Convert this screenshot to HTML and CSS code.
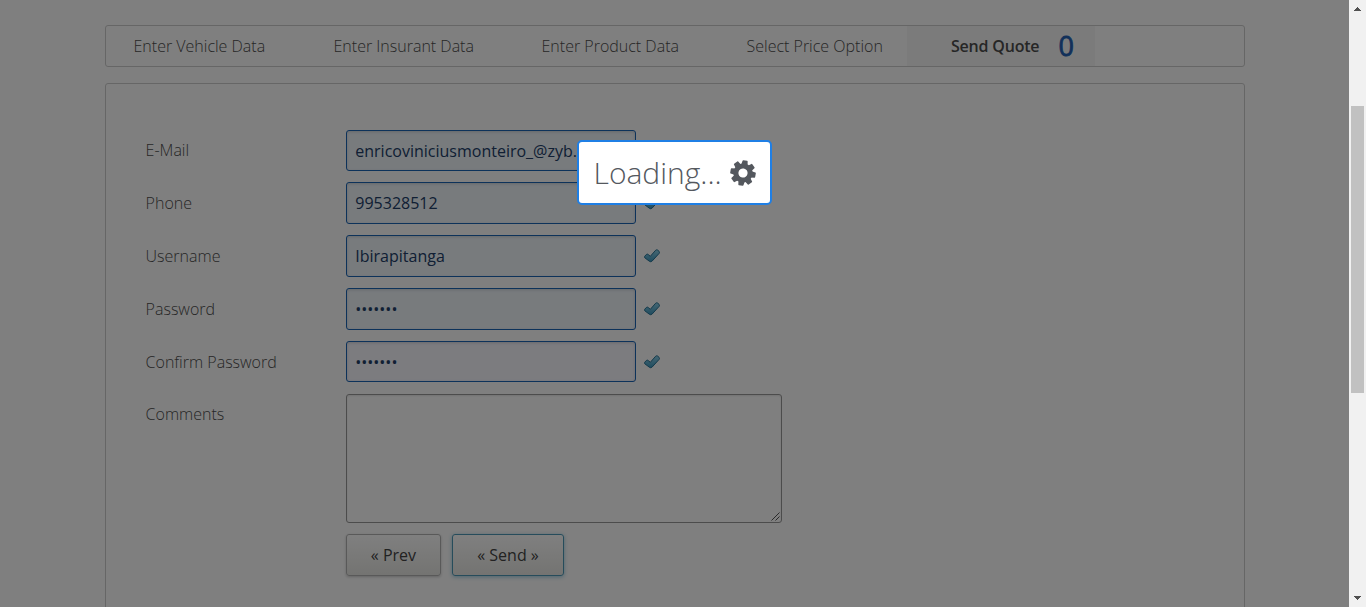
FILE: index.html
```html
<!DOCTYPE html>
<html lang="en">
<head>
<meta charset="utf-8">
<title>Send Quote</title>
<link rel="stylesheet" href="styles.css">
</head>
<body>
<div class="window">
  <main class="page">
    <nav class="steps">
      <a class="step">Enter Vehicle Data</a>
      <a class="step">Enter Insurant Data</a>
      <a class="step">Enter Product Data</a>
      <a class="step">Select Price Option</a>
      <a class="step step-active">Send Quote <span class="counter">0</span></a>
    </nav>
    <form class="panel">
      <div class="row"><label class="label">E-Mail</label><div class="field">enricoviniciusmonteiro_@zyb.com</div><svg class="check" viewBox="0 0 16 14"><use href="#tick"/></svg></div>
      <div class="row"><label class="label">Phone</label><div class="field">995328512</div><svg class="check" viewBox="0 0 16 14"><use href="#tick"/></svg></div>
      <div class="row"><label class="label">Username</label><div class="field">Ibirapitanga</div><svg class="check" viewBox="0 0 16 14"><use href="#tick"/></svg></div>
      <div class="row"><label class="label">Password</label><div class="field">•••••••</div><svg class="check" viewBox="0 0 16 14"><use href="#tick"/></svg></div>
      <div class="row"><label class="label">Confirm Password</label><div class="field field-focus">•••••••</div><svg class="check" viewBox="0 0 16 14"><use href="#tick"/></svg></div>
      <div class="row row-comments"><label class="label">Comments</label><div class="comments"><svg class="grip" viewBox="0 0 9 9"><path d="M.5 8.5l8-8M4.500 8.500l4-4" /></svg></div></div>
      <div class="actions"><div class="button">« Prev</div><div class="button button-send">« Send »</div></div>
    </form>
  </main>
  <aside class="scrollbar">
    <svg class="arrow" viewBox="0 0 7 4"><path d="M3 0h1v1h1v1h1v1h1v1H0V3h1V2h1V1h1z"/></svg>
    <div class="thumb"></div>
    <svg class="arrow" viewBox="0 0 7 4"><path d="M0 0h7v1H6v1H5v1H4v1H3V3H2V2H1V1H0z"/></svg>
  </aside>
  <div class="overlay"></div>
  <div class="loading">Loading...
    <svg class="gear" viewBox="-13 -13 26 26">
      <defs><path id="tooth" d="M-3.300-7.500L-2.600-12.100Q-2.500-12.700-1.900-12.700H1.900Q2.500-12.700 2.600-12.100L3.300-7.500z"/></defs>
      <g transform="rotate(10)">
        <circle r="7.100" fill="none" stroke="#54585e" stroke-width="5"/>
        <use href="#tooth"/><use href="#tooth" transform="rotate(45)"/><use href="#tooth" transform="rotate(90)"/><use href="#tooth" transform="rotate(135)"/><use href="#tooth" transform="rotate(180)"/><use href="#tooth" transform="rotate(225)"/><use href="#tooth" transform="rotate(270)"/><use href="#tooth" transform="rotate(315)"/>
      </g>
    </svg>
  </div>
</div>
<svg class="symbols">
  <defs>
    <linearGradient id="blue" x1="0" y1="0" x2="0" y2="1"><stop offset="0" stop-color="#8fd0e8"/><stop offset="1" stop-color="#3d98be"/></linearGradient>
    <symbol id="tick" viewBox="0 0 16 14"><path d="M.7 7.300L2.300 5.500Q3.200 4.600 4.200 5.500L6.300 7.300L11.700 1.200Q12.700.4 13.700 1.100L15.200 2.500Q15.800 3.400 15.200 4.300L8.200 12Q6.700 13.400 5.300 12.200L.8 8.800Q.2 8 .7 7.300z" fill="url(#blue)" stroke="#287395" stroke-width="1"/></symbol>
  </defs>
</svg>
</body>
</html>
```
FILE: styles.css
```css
* { box-sizing: border-box; }
body { margin: 0; overflow: hidden; font: 300 16px/22px "Open Sans", sans-serif; color: #4d4d4d; background: #fff; }
.window { position: relative; display: flex; height: 607px; overflow: hidden; }
.page { width: 1349px; padding: 25px 104px 0 105px; }
.symbols { position: absolute; width: 0; height: 0; }

.steps { display: grid; grid-template-columns: 200px 208px 205px 188px 188px; grid-template-rows: 40px; height: 42px; border: 1px solid #ccc; border-radius: 3px; }
.step { padding-left: 27.500px; line-height: 41px; white-space: nowrap; }
.step-active { display: flex; gap: 19px; margin: 0 0 0 0; padding-left: 44px; background: #f7f7f7; font-weight: 600; letter-spacing: -.2px; }
.counter { font-size: 27px; font-weight: 400; line-height: 39px; color: #2461b4; -webkit-text-stroke: .8px #2461b4; }

.panel { height: 560px; margin-top: 16px; padding: 45.600px 39px 0 39.600px; border: 1px solid #ccc; border-radius: 3px; }
.row { display: flex; align-items: center; height: 41.600px; margin-bottom: 11.200px; }
.label { width: 200.400px; }
.field { width: 290px; height: 41.600px; padding: 0 8.300px; border: 1px solid #1b65b5; border-radius: 3px; background: #f0f6fb; box-shadow: inset 0 1px 3px rgba(0,0,0,.15); color: #223e68; font-weight: 400; line-height: 40px; white-space: nowrap; overflow: hidden; }
.field-focus { background: #f8f8ff; }
.check { width: 16px; height: 14px; margin-left: 8px; }
.row-comments { align-items: flex-start; height: 129px; line-height: 40px; }
.comments { display: flex; align-items: flex-end; justify-content: flex-end; width: 436px; height: 129px; border: 1px solid #999; border-radius: 3px; box-shadow: inset 0 1px 2px rgba(0,0,0,.1); }
.grip { width: 9px; height: 9px; margin: 1px; fill: none; stroke: #555; }

.actions { display: flex; gap: 11px; padding-left: 200.400px; }
.button { width: 95px; height: 42px; border: 1px solid #b3b3b3; border-radius: 3px; background: linear-gradient(#fff, #e8e8e4); box-shadow: 0 1px 3px rgba(0,0,0,.22); color: #444; font-weight: 400; line-height: 40px; text-align: center; }
.button-send { width: 112px; border-color: #4c98b7; box-shadow: 0 1px 4px rgba(48,145,185,.5); }

.overlay { position: absolute; inset: 0 17px 0 0; background: rgba(0,0,0,.5); }
.loading { position: absolute; left: 577px; top: 140px; display: flex; align-items: center; gap: 8.500px; width: 195px; height: 65px; padding-left: 14.500px; border: 2px solid #1f7fe5; border-radius: 5px; background: #fff; color: #54585e; font-size: 30px; line-height: 61px; white-space: nowrap; }
.gear { width: 26px; height: 26px; fill: #54585e; }

.scrollbar { display: flex; flex-direction: column; align-items: center; justify-content: space-between; width: 17px; padding: 7px 0; background: #f1f1f1; }
.thumb { width: 13px; height: 287px; margin-bottom: 108px; background: #c1c1c1; }
.arrow { width: 7px; height: 4px; fill: #505050; }
```
